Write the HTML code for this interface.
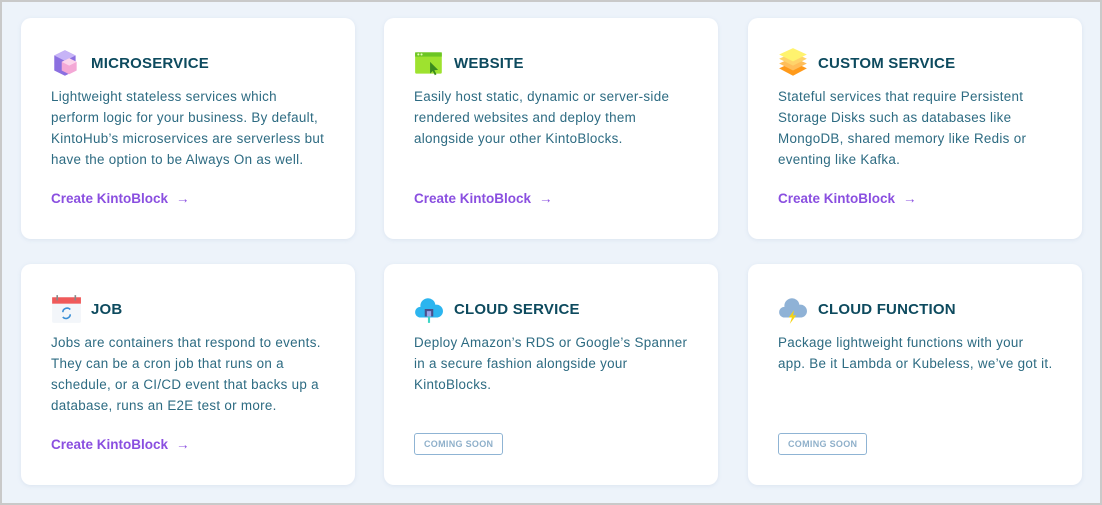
<!DOCTYPE html>
<html><head><meta charset="utf-8"><style>
*{margin:0;padding:0;box-sizing:border-box}
html,body{width:1102px;height:505px;overflow:hidden}
body{background:#edf3fa;font-family:"Liberation Sans",sans-serif;position:relative;border:2px solid #c9c9c9;}
.card{position:absolute;width:334px;height:221px;background:#fff;border-radius:10px;box-shadow:0 1px 4px rgba(120,150,190,.15);padding:0 30px}
.hd{position:absolute;left:30px;top:30px;display:flex;align-items:center;height:30px}
.hd svg{width:30px;height:32px;margin-right:10px;margin-left:0}
.hd span{font-weight:bold;font-size:15px;color:#0d4a5e;letter-spacing:.2px}
.bd{position:absolute;left:30px;top:68px;width:280px;font-size:13.4px;line-height:21px;color:#2d6b82;letter-spacing:.3px}
.lk{position:absolute;left:30px;top:173px;font-size:13.5px;font-weight:bold;color:#8a4fe0}
.lk i{font-style:normal;font-weight:normal;margin-left:8px}
.cs{position:absolute;left:30px;top:169px;border:1px solid #8fb4d4;border-radius:3px;font-size:9px;font-weight:bold;color:#8fb0ca;padding:5px 9px;letter-spacing:.3px}
</style></head><body>
<div class="card" style="left:19px;top:16px">
<div class="hd"><svg viewBox="0 0 28 30"><path d="M3 8 L13 3 L23 8 L23 22 L13 27 L3 22Z" fill="#8b6fe0"/><path d="M13 3 L23 8 L13 13 L3 8Z" fill="#c7b4f7"/><path d="M10 14 L17 10.5 L24 14 L24 22 L17 25.5 L10 22Z" fill="#f4a8d6"/><path d="M10 14 L17 10.5 L24 14 L17 17.5Z" fill="#fcd5ec"/></svg><span>MICROSERVICE</span></div>
<div class="bd">Lightweight stateless services which<br>perform logic for your business. By default, KintoHub’s microservices are serverless but have the option to be Always On as well.</div>
<div class="lk">Create KintoBlock<i>→</i></div></div>
<div class="card" style="left:382px;top:16px">
<div class="hd"><svg viewBox="0 0 28 30"><rect x="1" y="5" width="25" height="20" rx="1.5" fill="#9ee22f"/><rect x="1" y="5" width="25" height="4" fill="#6cc524"/><circle cx="4" cy="7" r="1" fill="#e8ffb8"/><circle cx="7" cy="7" r="1" fill="#e8ffb8"/><path d="M15 14 L15 25 L17.5 22.5 L19.5 26.5 L21 25.5 L19 21.8 L22.5 21.5Z" fill="#3a8a1e"/></svg><span>WEBSITE</span></div>
<div class="bd">Easily host static, dynamic or server-side<br>rendered websites and deploy them<br>alongside your other KintoBlocks.</div>
<div class="lk">Create KintoBlock<i>→</i></div></div>
<div class="card" style="left:746px;top:16px">
<div class="hd"><svg viewBox="0 0 28 30"><path d="M14 14 L27 20 L14 27 L1 20Z" fill="#ff9a1a"/><path d="M14 9.5 L27 15.5 L14 22 L1 15.5Z" fill="#ffbe5a"/><path d="M14 5 L27 11 L14 17.5 L1 11Z" fill="#ffd36a"/><path d="M14 1 L27 7 L14 13.5 L1 7Z" fill="#fff36e"/></svg><span>CUSTOM SERVICE</span></div>
<div class="bd">Stateful services that require Persistent<br>Storage Disks such as databases like<br>MongoDB, shared memory like Redis or<br>eventing like Kafka.</div>
<div class="lk">Create KintoBlock<i>→</i></div></div>
<div class="card" style="left:19px;top:262px">
<div class="hd"><svg viewBox="0 0 28 30"><rect x="1" y="4" width="27" height="24" rx="1.5" fill="#f3f6fa"/><rect x="1" y="4" width="27" height="6" fill="#f05a5a"/><rect x="5" y="2" width="1.5" height="5" fill="#888"/><rect x="22" y="2" width="1.5" height="5" fill="#888"/><path d="M11 18 a4 4 0 0 1 7-2.5 M18 20 a4 4 0 0 1-7 2.5" stroke="#3b8fd6" stroke-width="1.5" fill="none"/></svg><span>JOB</span></div>
<div class="bd">Jobs are containers that respond to events.<br>They can be a cron job that runs on a<br>schedule, or a CI/CD event that backs up a<br>database, runs an E2E test or more.</div>
<div class="lk">Create KintoBlock<i>→</i></div></div>
<div class="card" style="left:382px;top:262px">
<div class="hd"><svg viewBox="0 0 28 30"><path d="M6 23 a5 5 0 0 1 0-10 a7 7 0 0 1 14-2 a6 6 0 0 1 2 12Z" fill="#2cb5ef"/><rect x="10" y="15" width="8" height="7" fill="#4a4f8a"/><rect x="12" y="17" width="4" height="5" fill="#9aa4e8"/><rect x="13" y="22" width="2" height="6" fill="#3ed6c6"/></svg><span>CLOUD SERVICE</span></div>
<div class="bd">Deploy Amazon’s RDS or Google’s Spanner<br>in a secure fashion alongside your<br>KintoBlocks.</div>
<div class="cs">COMING SOON</div></div>
<div class="card" style="left:746px;top:262px">
<div class="hd"><svg viewBox="0 0 28 30"><path d="M6 23 a5 5 0 0 1 0-10 a7 7 0 0 1 14-2 a6 6 0 0 1 2 12Z" fill="#8fb2d6"/><path d="M15 16 L10 23 L13 23 L11 29 L17 21 L14 21Z" fill="#f5d313"/></svg><span>CLOUD FUNCTION</span></div>
<div class="bd" style="width:300px">Package lightweight functions with your<br>app. Be it Lambda or Kubeless, we’ve got it.</div>
<div class="cs">COMING SOON</div></div>
</body></html>
